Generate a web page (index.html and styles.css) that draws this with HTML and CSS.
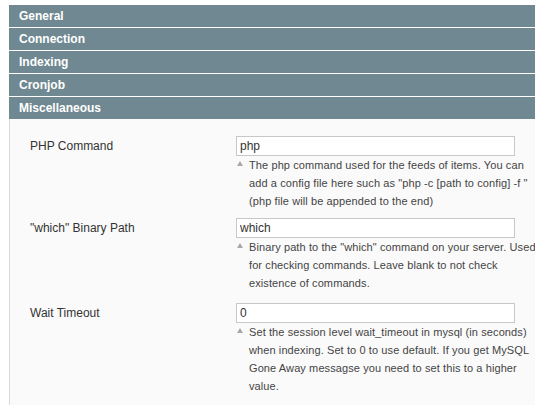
FILE: index.html
```html
<!DOCTYPE html>
<html lang="en">
<head>
  <meta charset="UTF-8">
  <title>Configuration</title>
  <link rel="stylesheet" href="styles.css">
</head>
<body>
  <div class="config">
    <div class="section-head">General</div>
    <div class="section-head">Connection</div>
    <div class="section-head">Indexing</div>
    <div class="section-head">Cronjob</div>
    <div class="section-head">Miscellaneous</div>

    <div class="section-body">
      <div class="field">
        <label class="field-label" for="php_cmd">PHP Command</label>
        <div class="field-value">
          <input class="input-text" id="php_cmd" type="text" value="php">
          <p class="note">The php command used for the feeds of items. You can add a config file here such as "php -c [path to config] -f " (php file will be appended to the end)</p>
        </div>
      </div>

      <div class="field">
        <label class="field-label" for="which_path">"which" Binary Path</label>
        <div class="field-value">
          <input class="input-text" id="which_path" type="text" value="which">
          <p class="note">Binary path to the "which" command on your server. Used for checking commands. Leave blank to not check existence of commands.</p>
        </div>
      </div>

      <div class="field">
        <label class="field-label" for="wait_timeout">Wait Timeout</label>
        <div class="field-value">
          <input class="input-text" id="wait_timeout" type="text" value="0">
          <p class="note">Set the session level wait_timeout in mysql (in seconds) when indexing. Set to 0 to use default. If you get MySQL Gone Away messagse you need to set this to a higher value.</p>
        </div>
      </div>
    </div>
  </div>
</body>
</html>
```

FILE: styles.css
```css
body {
  margin: 0;
  background: #fff;
  font-family: Arial, 'Liberation Sans', sans-serif;
  color: #333;
  overflow-x: hidden;
}

.config {
  padding: 5px 0 0 9px;
}

.section-head {
  background-color: #6f8891;
  color: #fff;
  font-weight: bold;
  font-size: 12px;
  height: 22px;
  line-height: 22px;
  padding-left: 10px;
  margin-bottom: 1px;
}

.section-body {
  background: #fafafa;
  border-left: 1px solid #d9d9d9;
  padding: 17px 0 4px 20px;
  margin-top: -1px;
}

.field {
  display: flex;
  margin-bottom: 11px;
}

.field:first-child {
  margin-bottom: 8px;
}

.field-label {
  width: 206px;
  flex-shrink: 0;
  font-size: 12px;
  line-height: 20px;
  color: #333;
}

.field-value {
  width: 306px;
  flex-shrink: 0;
}

.input-text {
  display: block;
  box-sizing: border-box;
  width: 279px;
  height: 20px;
  margin: 0;
  padding: 0 3px;
  border: 1px solid #c8c8c8;
  background: #fff;
  font-family: Arial, 'Liberation Sans', sans-serif;
  font-size: 12px;
  color: #333;
  outline: none;
}

.note {
  position: relative;
  margin: 0;
  padding-left: 13px;
  font-size: 11px;
  line-height: 18px;
  letter-spacing: 0.1px;
  color: #444;
}

.note::before {
  content: "";
  position: absolute;
  left: 1px;
  top: 5px;
  border-left: 3px solid transparent;
  border-right: 3px solid transparent;
  border-bottom: 5px solid #a8a8a8;
}
```
